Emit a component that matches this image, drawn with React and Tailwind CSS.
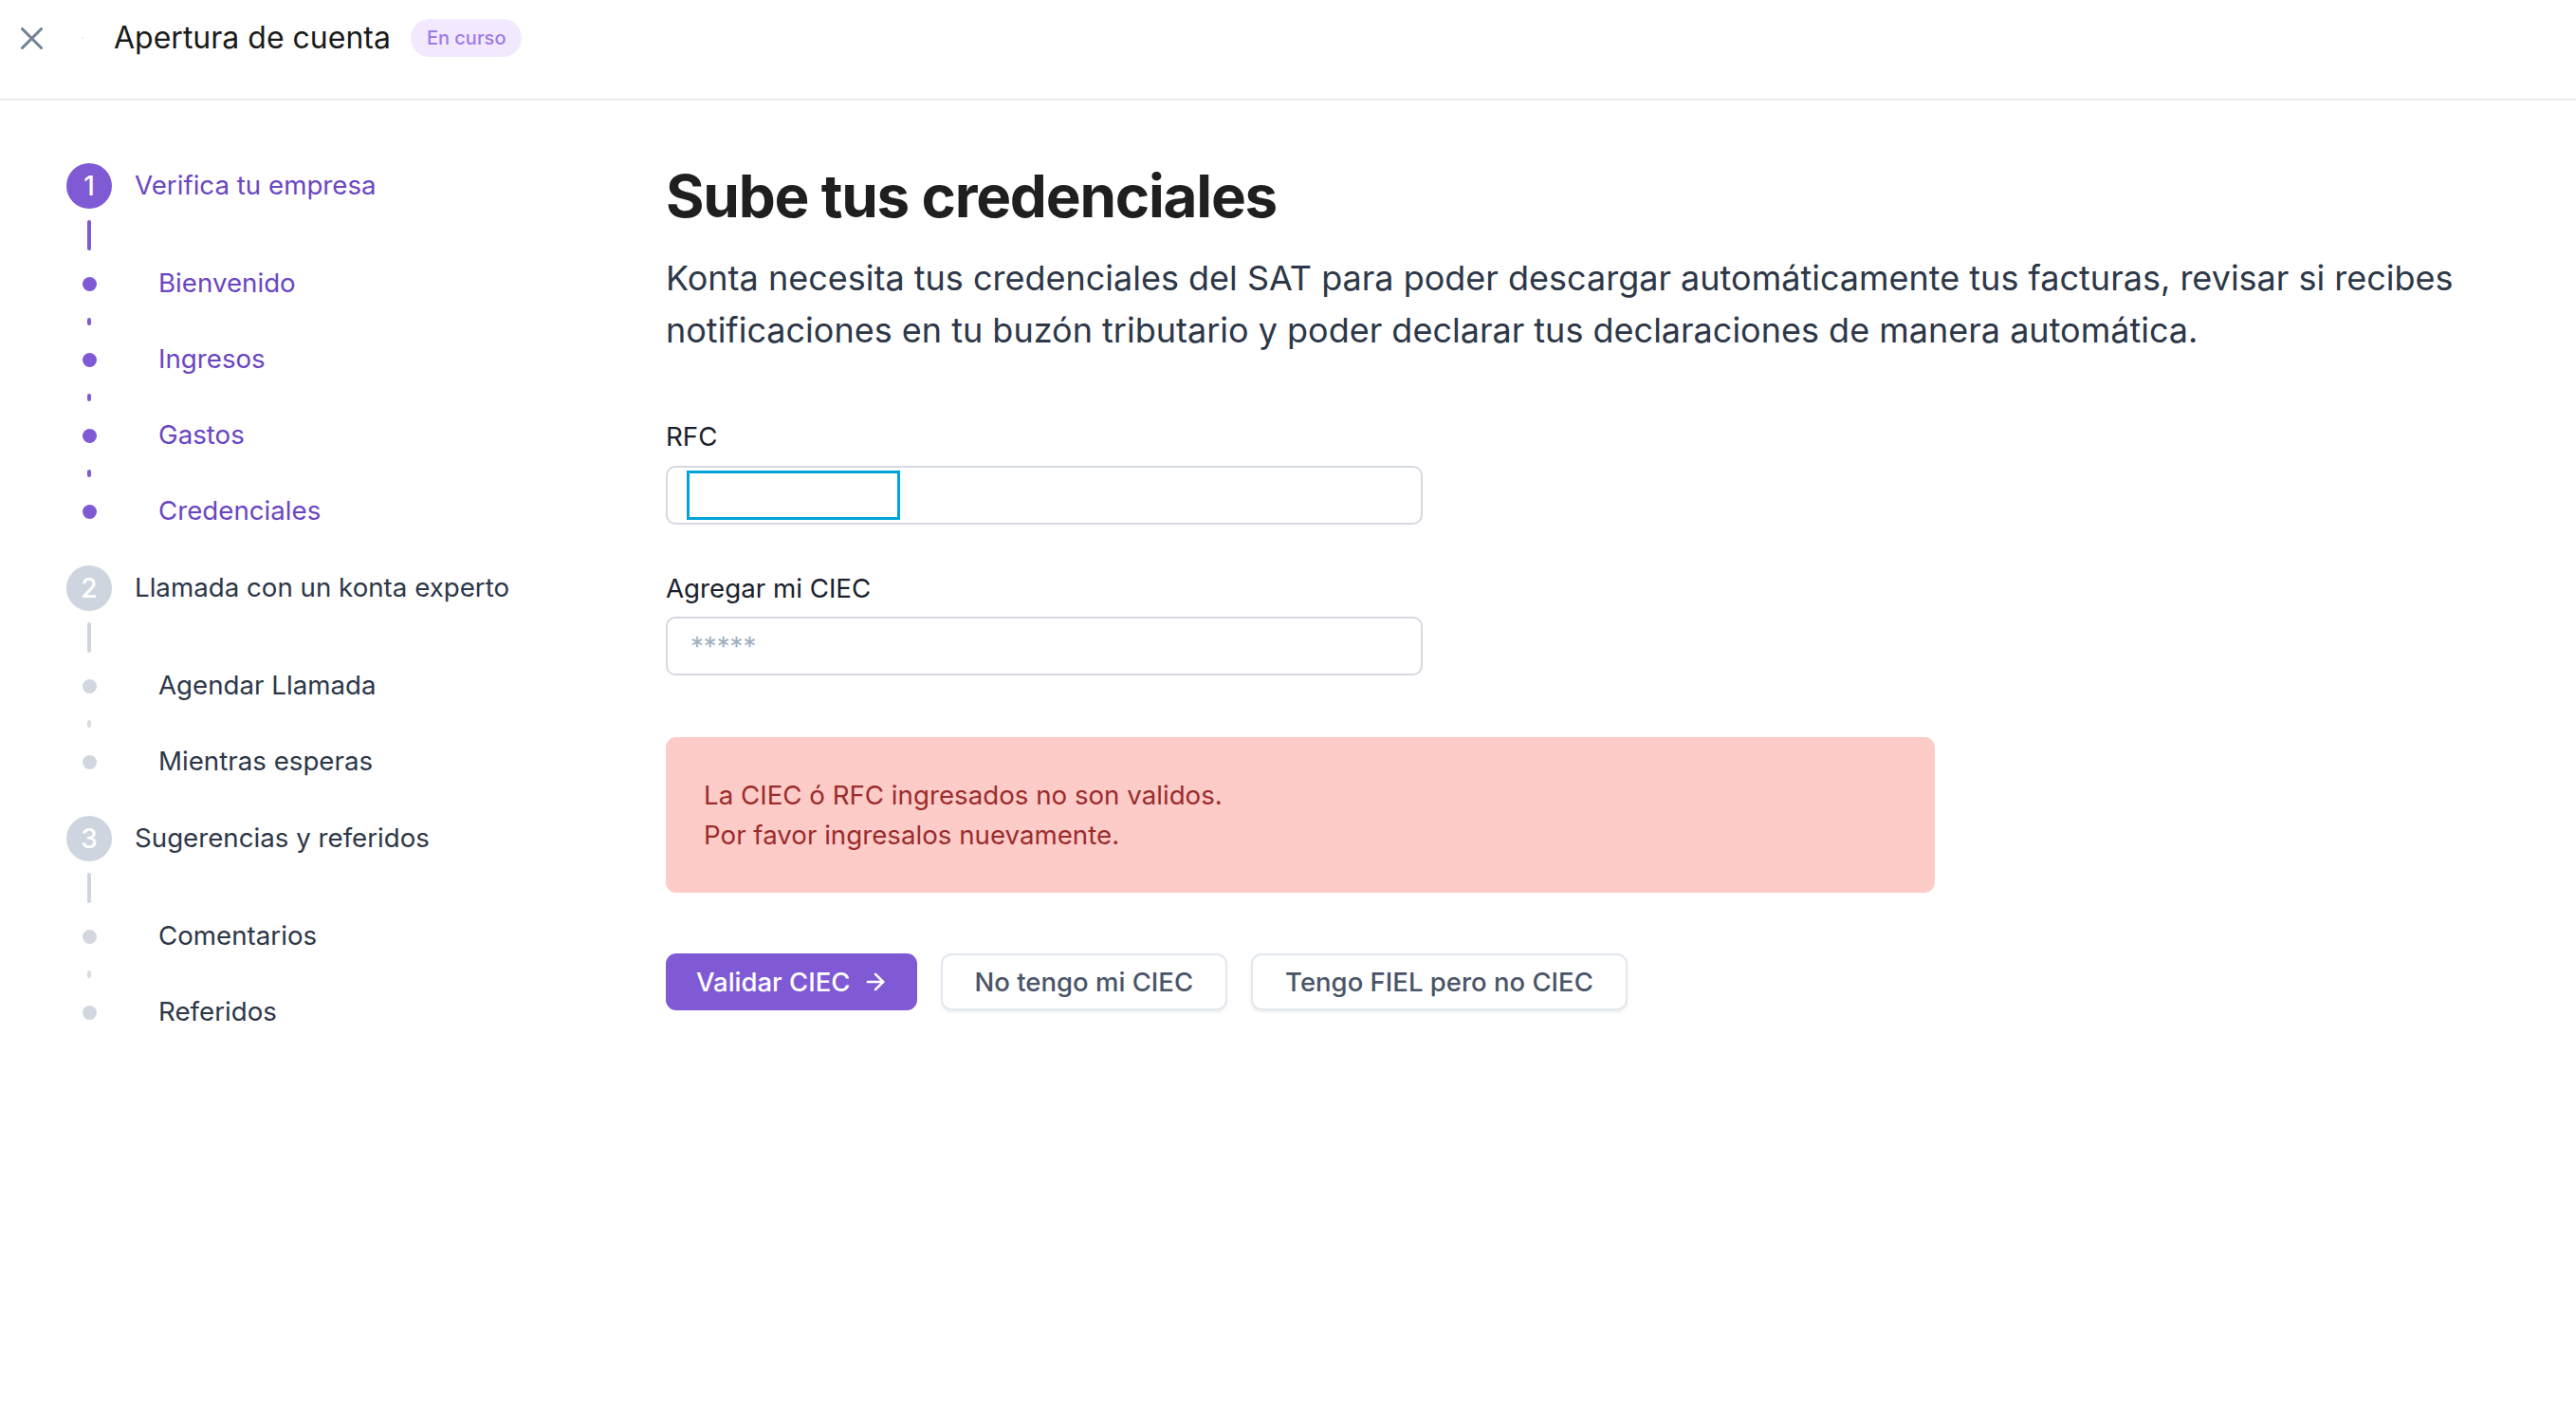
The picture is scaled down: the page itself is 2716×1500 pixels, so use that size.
import { ArrowRight } from 'lucide-react'

const STEPS = [
  {
    n: 1,
    title: 'Verifica tu empresa',
    active: true,
    items: ['Bienvenido', 'Ingresos', 'Gastos', 'Credenciales'],
  },
  {
    n: 2,
    title: 'Llamada con un konta experto',
    active: false,
    items: ['Agendar Llamada', 'Mientras esperas'],
  },
  {
    n: 3,
    title: 'Sugerencias y referidos',
    active: false,
    items: ['Comentarios', 'Referidos'],
  },
]

function Step({ step, last }) {
  const on = step.active
  return (
    <div className={last ? '' : 'pb-[34px]'}>
      {/* step heading */}
      <div className="flex items-center h-12">
        <div className={`w-12 h-12 rounded-full flex items-center justify-center text-white text-[28px] font-medium ${on ? 'bg-[#805ad5]' : 'bg-[#cfd5de]'}`}>
          {step.n}
        </div>
        <span className={`ml-6 text-[27.7px] ${on ? 'text-[#6b46c1]' : 'text-[#2d3748]'}`}>{step.title}</span>
      </div>

      <div className="w-12 flex justify-center py-3">
        <div className={`w-1 h-8 rounded-full ${on ? 'bg-[#805ad5]' : 'bg-[#cfd5de]'}`} />
      </div>

      {step.items.map((item, i) => (
        <div key={item}>
          {i > 0 && (
            <div className="w-12 h-[34px] flex items-center justify-center">
              <div className={`w-1 h-2 rounded-full ${on ? 'bg-[#805ad5]' : 'bg-[#d8dde4]'}`} />
            </div>
          )}
          <div className="flex items-center h-[46px]">
            <div className="w-12 flex justify-center">
              <div className={`w-[15px] h-[15px] rounded-full ${on ? 'bg-[#805ad5]' : 'bg-[#d2d7df]'}`} />
            </div>
            <span className={`ml-[49px] text-[27.7px] ${on ? 'text-[#6b46c1]' : 'text-[#2d3748]'}`}>{item}</span>
          </div>
        </div>
      ))}
    </div>
  )
}

export default function App() {
  return (
    <div className="min-h-screen bg-white font-['Inter',sans-serif] text-[#1a1a1a]">
      {/* ── Header ───────────────────────────────────────────── */}
      <header className="h-[106px] border-b-2 border-[#ececf1]">
        <div className="h-20 flex items-center pl-[22px]">
          <svg width="23" height="23" viewBox="0 0 23 23" className="shrink-0">
            <path d="M1.5 1.5l20 20M21.5 1.5l-20 20" stroke="#718096" strokeWidth="3" strokeLinecap="round" />
          </svg>
          <div className="ml-[41px] w-[2px] h-[2px] rounded-full bg-[#e5e7eb]" />
          <h1 className="ml-[32px] text-[32px] text-[#1a1a1a]">Apertura de cuenta</h1>
          <span className="ml-[21px] h-10 px-[17px] rounded-full bg-[#f2e9fe] text-[#9f7aea] text-[20px] font-medium flex items-center">
            En curso
          </span>
        </div>
      </header>

      <div className="flex">
        {/* ── Sidebar steps ─────────────────────────────────── */}
        <aside className="w-[702px] shrink-0 pl-[70px] pt-[66px]">
          {STEPS.map((s, i) => (
            <Step key={s.n} step={s} last={i === STEPS.length - 1} />
          ))}
        </aside>

        {/* ── Main form ─────────────────────────────────────── */}
        <main className="pt-[64px] w-[1950px]">
          <h2 className="text-[62px] font-bold leading-[1.2] tracking-[-0.02em] text-[#1f1f1f]">Sube tus credenciales</h2>
          <p className="mt-[22px] text-[36px] leading-[55px] text-[#2d3748]">
            Konta necesita tus credenciales del SAT para poder descargar automáticamente tus facturas, revisar si recibes notificaciones en tu buzón tributario y poder declarar tus declaraciones de manera automática.
          </p>

          <label className="block mt-[63px] text-[27.7px] leading-[42px] text-[#1a202c]">RFC</label>
          <div className="relative mt-[10px] w-[798px]">
            <input
              readOnly
              className="w-full h-[62px] rounded-[10px] border-2 border-[#d5d9e0] bg-white px-6 text-[27.7px] outline-none"
            />
            <div className="absolute left-[22px] top-[5px] w-[225px] h-[52px] border-[3px] border-[#00a3da]" />
          </div>

          <label className="block mt-[46px] text-[27.7px] leading-[42px] text-[#1a202c]">Agregar mi CIEC</label>
          <input
            readOnly
            placeholder="*****"
            className="mt-[9px] block w-[798px] h-[62px] rounded-[10px] border-2 border-[#d5d9e0] bg-white px-6 text-[27.7px] outline-none placeholder:text-[#a0aec0]"
          />

          <div className="mt-[65px] w-[1338px] rounded-[11px] bg-[#fdcbc8] px-[40px] py-10 text-[27.7px] leading-[42px] text-[#9b2c2c]">
            <p>La CIEC ó RFC ingresados no son validos.</p>
            <p>Por favor ingresalos nuevamente.</p>
          </div>

          <div className="mt-16 flex gap-[25px]">
            <button className="h-[60px] rounded-[11px] bg-[#805ad5] pl-8 pr-[30px] text-[27.5px] font-medium text-white flex items-center gap-3">
              Validar CIEC
              <ArrowRight size={28} strokeWidth={2.2} />
            </button>
            <button className="h-[60px] rounded-[11px] border-2 border-[#e2e8f0] bg-white px-[34px] text-[27.5px] font-medium text-[#4a5568] shadow-[0_2px_3px_rgba(0,0,0,0.07)]">
              No tengo mi CIEC
            </button>
            <button className="h-[60px] rounded-[11px] border-2 border-[#e2e8f0] bg-white px-[34px] text-[27.5px] font-medium text-[#4a5568] shadow-[0_2px_3px_rgba(0,0,0,0.07)]">
              Tengo FIEL pero no CIEC
            </button>
          </div>
        </main>
      </div>
    </div>
  )
}
